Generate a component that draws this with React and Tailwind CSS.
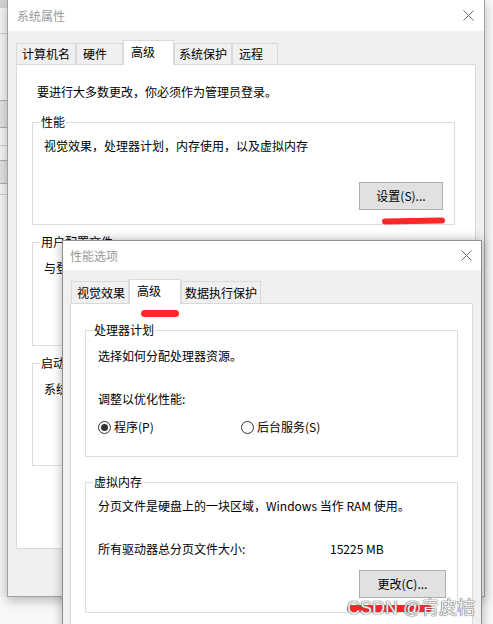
import React from "react";

const FONT = "font-['Noto_Sans_CJK_SC','Noto_Sans',sans-serif]";

function CloseIcon() {
    return (
        <svg width="11" height="11" viewBox="0 0 11 11" fill="none">
            <path d="M0.5 0.5 L10.5 10.5 M10.5 0.5 L0.5 10.5" stroke="#6b6b6b" strokeWidth="1" />
        </svg>
    );
}

function Tab({ label, selected, className = "" }) {
    if (selected) {
        return (
            <div className={`relative z-10 -mb-px h-[25px] pt-[3px] bg-white border-t border-x border-[#d9d9d9] ${className}`}>
                {label}
            </div>
        );
    }
    return (
        <div className={`h-[21px] flex items-center bg-[#f0f0f0] border-t border-x border-[#d9d9d9] ${className}`}>
            {label}
        </div>
    );
}

function Group({ label, className = "", children }) {
    return (
        <fieldset className={`border border-[#dcdcdc] ${className}`}>
            <legend className="ml-[7px] px-px">{label}</legend>
            {children}
        </fieldset>
    );
}

function Button({ children, className = "" }) {
    return (
        <div className={`flex items-center justify-center bg-[#e1e1e1] border border-[#adadad] ${className}`}>
            {children}
        </div>
    );
}

function Radio({ checked, label, className = "" }) {
    return (
        <div className={`flex items-center gap-[3px] ${className}`}>
            <div className="w-[13px] h-[13px] rounded-full border border-[#333] flex items-center justify-center bg-white">
                {checked && <div className="w-[7px] h-[7px] rounded-full bg-[#333]" />}
            </div>
            <span>{label}</span>
        </div>
    );
}

function SystemProperties() {
    return (
        <div className="absolute left-[7px] top-0 w-[478px] h-[597px] flex flex-col border-x border-b border-[#a0a0a0] shadow-[0_4px_10px_rgba(0,0,0,0.25)]">
            <div className="h-[31px] bg-white flex items-center justify-between pl-[9px] pr-[10px] text-[#9a9a9a]">
                <span>系统属性</span>
                <CloseIcon />
            </div>
            <div className="flex-1 bg-[#f0f0f0] px-[8px] pt-[9px]">
                <div className="flex items-end h-[24px]">
                    <Tab label="计算机名" className="w-[60px] justify-center" />
                    <Tab label="硬件" className="w-[47px] pl-[6px]" />
                    <Tab label="高级" selected className="w-[51px] pl-[7px]" />
                    <Tab label="系统保护" className="w-[58px] pl-[4px]" />
                    <Tab label="远程" className="w-[46px] pl-[6px]" />
                </div>
                <div className="h-[485px] bg-white border border-[#d9d9d9] pt-[19px] flex flex-col">
                    <div className="pl-[20px]">要进行大多数更改，你必须作为管理员登录。</div>
                    <Group label="性能" className="mt-[14px] ml-[15px] mr-[20px] h-[111px]">
                        <div className="pl-[11px] pt-[8px]">视觉效果，处理器计划，内存使用，以及虚拟内存</div>
                        <div className="flex justify-end pr-[11px] mt-[28px]">
                            <Button className="w-[84px] h-[28px]">设置(S)...</Button>
                        </div>
                    </Group>
                    <Group label="用户配置文件" className="mt-[9px] ml-[15px] mr-[20px] h-[112px]">
                        <div className="pl-[11px] pt-[10px]">与登录用户相关的桌面设置</div>
                    </Group>
                    <Group label="启动和故障恢复" className="mt-[9px] ml-[15px] mr-[20px] h-[111px]">
                        <div className="pl-[11px] pt-[10px]">系统启动、系统故障和调试信息</div>
                    </Group>
                </div>
            </div>
        </div>
    );
}

function PerformanceOptions() {
    return (
        <div className="absolute left-[62px] top-[240px] w-[420px] h-[400px] flex flex-col border border-[#8f8f8f] shadow-[0_0_10px_rgba(0,0,0,0.3)]">
            <div className="h-[29px] bg-white flex items-center justify-between pl-[7px] pr-[9px] text-[#9a9a9a]">
                <span>性能选项</span>
                <CloseIcon />
            </div>
            <div className="flex-1 flex flex-col bg-[#f0f0f0] pl-[7px] pr-[8px] pt-[9px]">
                <div className="flex items-end h-[24px] ml-px">
                    <Tab label="视觉效果" className="w-[58px] h-[22px] pl-[5px]" />
                    <Tab label="高级" selected className="w-[52px] pl-[7px]" />
                    <Tab label="数据执行保护" className="w-[80px] h-[22px] pl-[3px]" />
                </div>
                <div className="flex-1 bg-white border border-[#d9d9d9] flex flex-col">
                    <Group label="处理器计划" className="mt-[18px] mx-[14px] h-[135px]">
                        <div className="pl-[12px] pt-[10px]">选择如何分配处理器资源。</div>
                        <div className="pl-[12px] mt-[27px]">调整以优化性能:</div>
                        <div className="pl-[12px] mt-[12px] flex">
                            <Radio checked label="程序(P)" className="w-[143px]" />
                            <Radio label="后台服务(S)" />
                        </div>
                    </Group>
                    <Group label="虚拟内存" className="mt-[17px] mx-[14px] h-[139px]">
                        <div className="pl-[12px] pt-[8px]">分页文件是硬盘上的一块区域，Windows 当作 RAM 使用。</div>
                        <div className="pl-[12px] mt-[27px] flex">
                            <span className="w-[232px]">所有驱动器总分页文件大小:</span>
                            <span>15225 MB</span>
                        </div>
                        <div className="flex justify-end pr-[11px] mt-[13px]">
                            <Button className="w-[87px] h-[28px]">更改(C)...</Button>
                        </div>
                    </Group>
                </div>
            </div>
        </div>
    );
}

export default function App() {
    return (
        <div className={`relative w-[493px] h-[624px] overflow-hidden bg-[#f8f8f8] text-[12px] leading-[16px] text-black ${FONT}`}>
            {/* window behind, only a sliver shows */}
            <div className="absolute left-0 top-0 w-[8px] h-[597px] bg-[#f3f3f3] flex flex-col">
                <div className="h-[8px] bg-[#d4d4d4]" />
                <div className="mt-[25px] border-t border-[#c8c8c8]" />
                <div className="mt-[66px] h-[28px] bg-[#e1e1e1] border-y border-[#adadad]" />
                <div className="mt-[17px] border-t border-[#c8c8c8]" />
                <div className="mt-[14px] h-[24px] bg-[#e1e1e1] border-y border-[#adadad]" />
                <div className="mt-[10px] border-t border-[#c8c8c8]" />
            </div>

            <SystemProperties />
            <PerformanceOptions />

            {/* red marker strokes */}
            <div className="absolute left-[382px] top-[218px] w-[63px] h-[6px] rounded-full bg-[#ff2727] -rotate-1" />
            <div className="absolute left-[141px] top-[310px] w-[38px] h-[7px] rounded-full bg-[#ff2727]" />
            <div className="absolute left-[347px] top-[605px] w-[85px] h-[7px] rounded-full bg-[#ff2727]" />

            <div className="absolute left-[347px] top-[597px] text-[18px] leading-[22px] text-[#f2f2f2] [text-shadow:0_0_1px_#666,0_0_1px_#666,0_0_1px_#666] font-['Liberation_Sans','Noto_Sans_CJK_SC',sans-serif]">
                CSDN @青皮桔
            </div>
        </div>
    );
}
